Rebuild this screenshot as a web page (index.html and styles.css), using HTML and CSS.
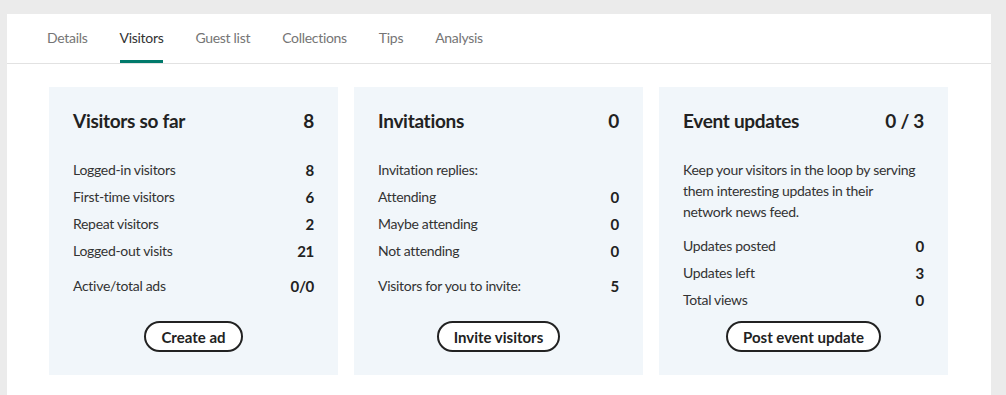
FILE: index.html
```html
<!DOCTYPE html>
<html>
<head>
<meta charset="UTF-8">
<title>Visitors</title>
<link rel="stylesheet" href="styles.css">
</head>
<body>
    <div class="panel">
        <div class="tabs">
            <a class="tab">Details</a>
            <a class="tab active">Visitors</a>
            <a class="tab">Guest list</a>
            <a class="tab">Collections</a>
            <a class="tab">Tips</a>
            <a class="tab">Analysis</a>
        </div>
        <div class="cards">
            <div class="card">
                <div class="card-head"><h2>Visitors so far</h2><span>8</span></div>
                <div class="rows">
                    <div class="row"><span>Logged-in visitors</span><b>8</b></div>
                    <div class="row"><span>First-time visitors</span><b>6</b></div>
                    <div class="row"><span>Repeat visitors</span><b>2</b></div>
                    <div class="row"><span>Logged-out visits</span><b>21</b></div>
                </div>
                <div class="row extra"><span>Active/total ads</span><b>0/0</b></div>
                <div class="actions"><button class="btn">Create ad</button></div>
            </div>
            <div class="card">
                <div class="card-head"><h2>Invitations</h2><span>0</span></div>
                <div class="rows">
                    <div class="row"><span>Invitation replies:</span></div>
                    <div class="row"><span>Attending</span><b>0</b></div>
                    <div class="row"><span>Maybe attending</span><b>0</b></div>
                    <div class="row"><span>Not attending</span><b>0</b></div>
                </div>
                <div class="row extra"><span>Visitors for you to invite:</span><b>5</b></div>
                <div class="actions"><button class="btn">Invite visitors</button></div>
            </div>
            <div class="card">
                <div class="card-head"><h2>Event updates</h2><span>0 / 3</span></div>
                <p class="intro">Keep your visitors in the loop by serving them interesting updates in their network news feed.</p>
                <div class="rows">
                    <div class="row"><span>Updates posted</span><b>0</b></div>
                    <div class="row"><span>Updates left</span><b>3</b></div>
                    <div class="row"><span>Total views</span><b>0</b></div>
                </div>
                <div class="actions"><button class="btn">Post event update</button></div>
            </div>
        </div>
    </div>
</body>
</html>
```

FILE: styles.css
```css
* { padding: 0; margin: 0; box-sizing: border-box; }
html, body {
    width: 100%;
    height: 100%;
}
body {
    background: #ebebeb;
    padding: 14px 15px 0 7px;
    font-family: Lato, "Open Sans", sans-serif;
    color: #333;
    letter-spacing: -0.3px;
    overflow: hidden;
}
.panel {
    background: #fff;
    min-height: 100%;
}
.tabs {
    display: flex;
    gap: 32px;
    height: 50px;
    padding-left: 40px;
    border-bottom: 1px solid #e2e2e2;
}
.tab {
    display: flex;
    align-items: center;
    height: 49px;
    padding-top: 1px;
    font-size: 14px;
    color: #757575;
    border-bottom: 3px solid transparent;
}
.tab.active {
    color: #333;
    border-bottom-color: #00796b;
}
.cards {
    display: flex;
    gap: 16px;
    padding: 23px 0 20px 42px;
}
.card {
    width: 289px;
    height: 288px;
    background: #f1f6fa;
    padding: 19px 24px 23px;
    display: flex;
    flex-direction: column;
}
.card-head {
    display: flex;
    justify-content: space-between;
    align-items: center;
    height: 28px;
    margin-bottom: 22px;
    font-size: 19px;
    font-weight: 700;
    color: #222;
}
.card-head h2 {
    font-size: 19px;
    font-weight: 700;
}
.row {
    display: flex;
    justify-content: space-between;
    align-items: center;
    height: 27px;
    font-size: 14px;
    color: #333;
}
.row b {
    font-weight: 700;
    font-size: 15px;
    color: #222;
}
.row.extra {
    margin-top: 8px;
}
.intro {
    font-size: 14px;
    line-height: 21px;
    margin-top: 3px;
    margin-bottom: 10px;
    color: #333;
}
.actions {
    margin-top: auto;
    display: flex;
    justify-content: center;
}
.btn {
    font-family: inherit;
    letter-spacing: 0;
    font-size: 15px;
    font-weight: 700;
    color: #222;
    background: #fff;
    border: 2px solid #222;
    border-radius: 16px;
    height: 31px;
    padding: 0 15px;
}
```
